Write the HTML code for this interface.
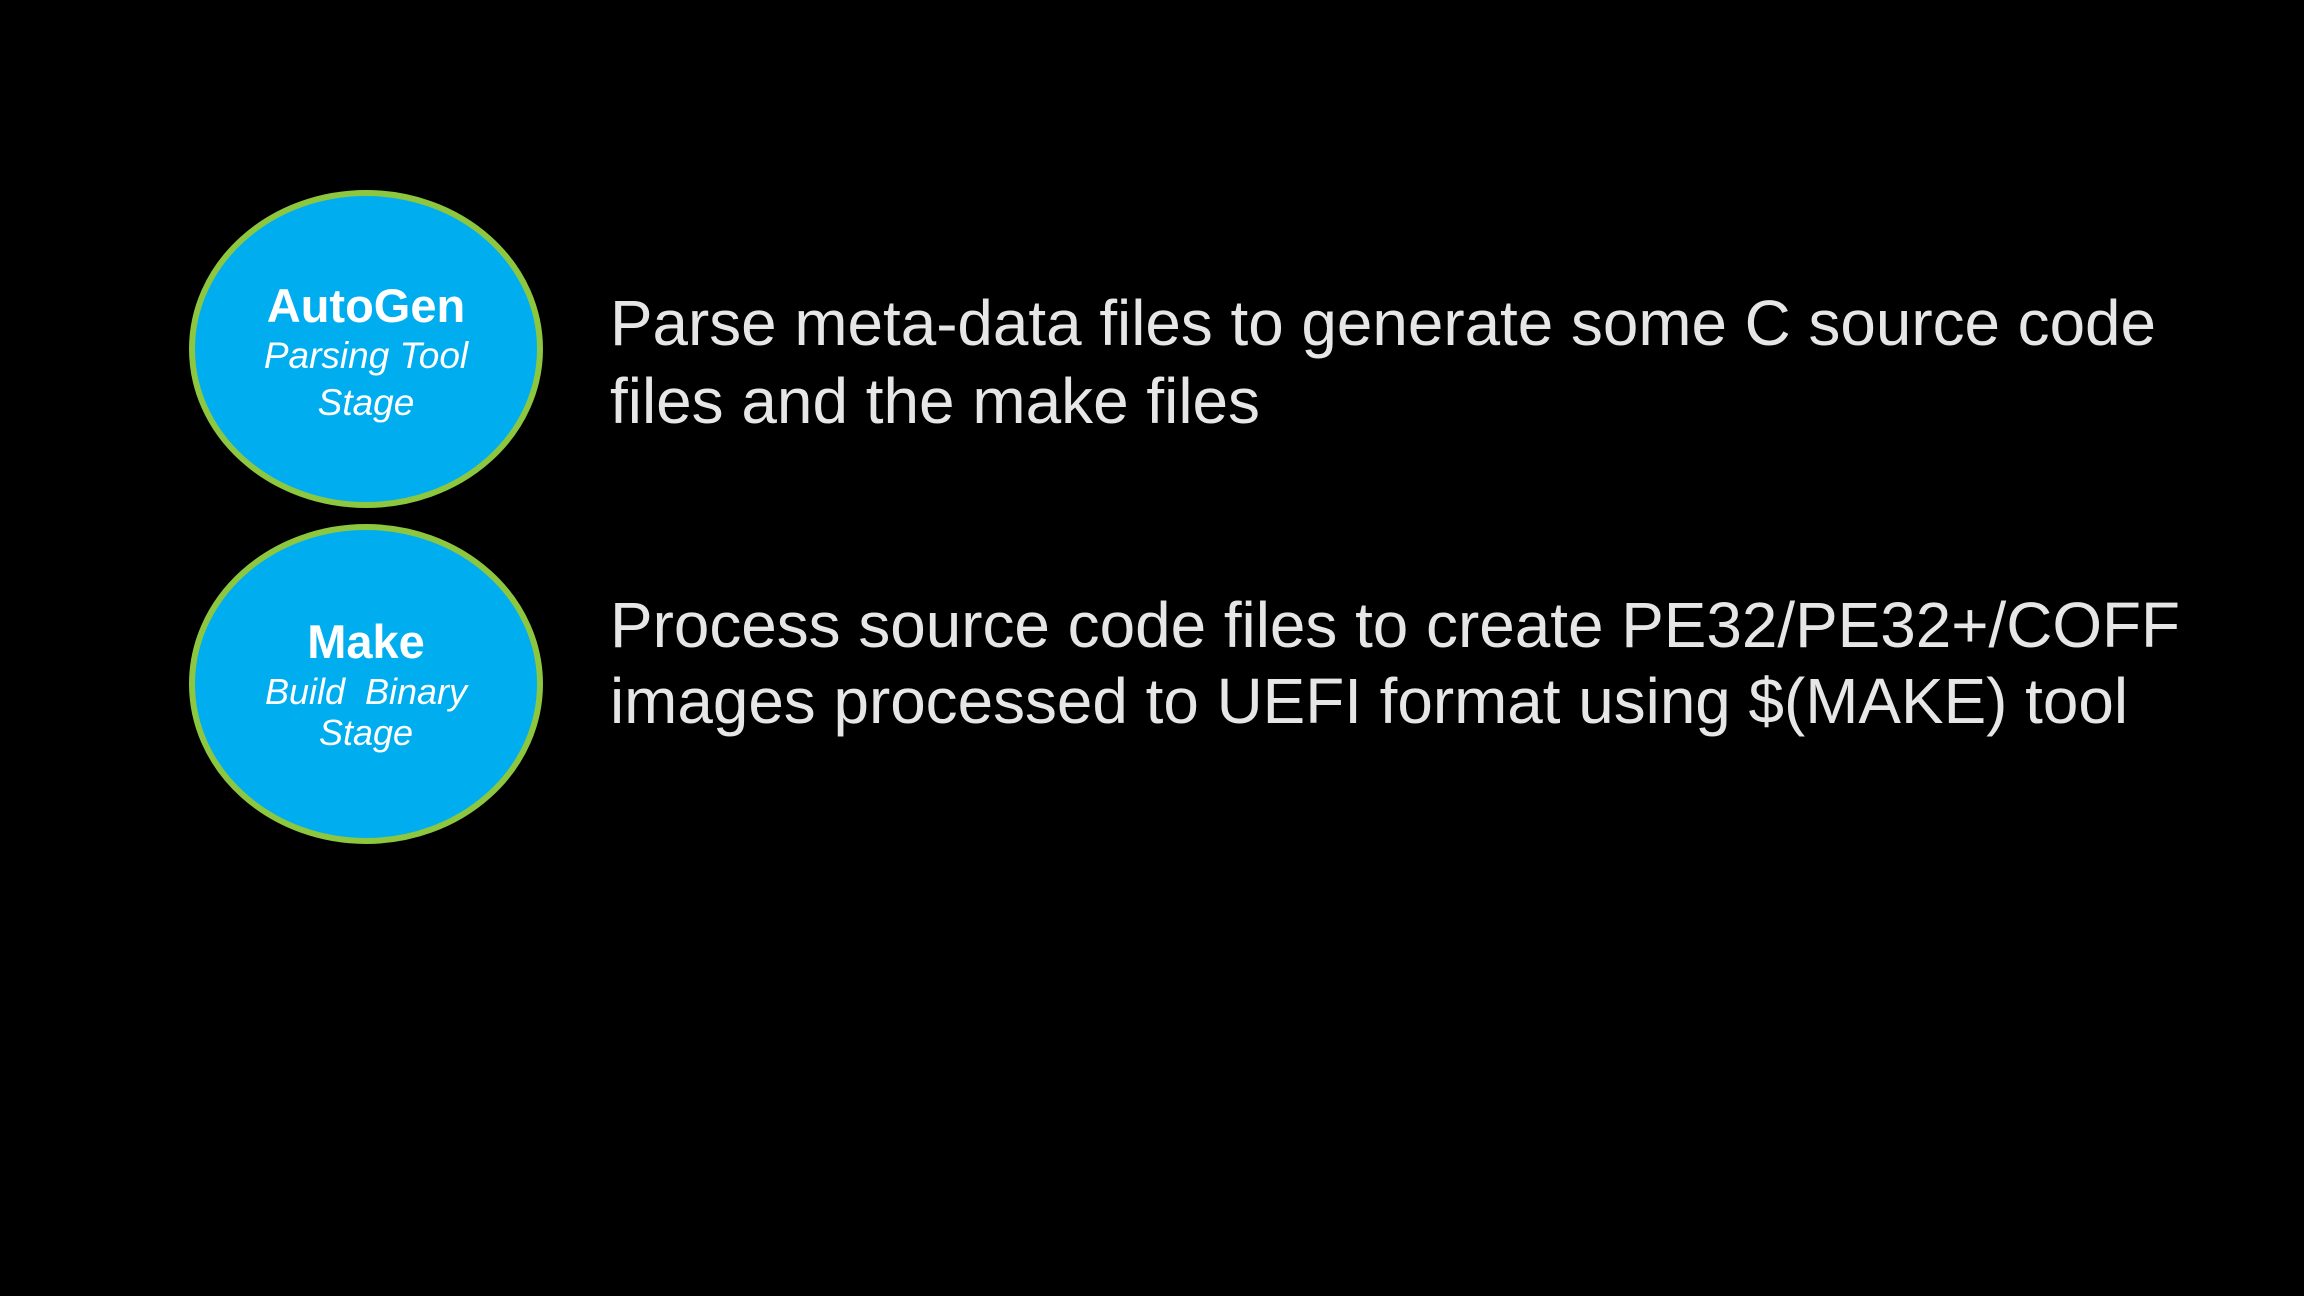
<!DOCTYPE html>
<html><head><meta charset="utf-8"><style>
html,body{margin:0;padding:0;background:#000;width:2304px;height:1296px;overflow:hidden}
svg{display:block}
</style></head><body>
<svg width="2304" height="1296" viewBox="0 0 2304 1296" xmlns="http://www.w3.org/2000/svg">
<rect width="2304" height="1296" fill="#000"/>
<ellipse cx="366" cy="349" rx="174" ry="156" fill="#00aeef" stroke="#8dc63f" stroke-width="6"/>
<ellipse cx="366" cy="684" rx="174" ry="157" fill="#00aeef" stroke="#8dc63f" stroke-width="6"/>
<g font-family="Liberation Sans, sans-serif" fill="#fff" text-anchor="middle">
<text x="366" y="322" font-size="47" font-weight="bold">AutoGen</text>
<text x="366" y="368" font-size="37" font-style="italic">Parsing Tool</text>
<text x="366" y="415" font-size="37" font-style="italic">Stage</text>
<text x="366" y="658" font-size="47" font-weight="bold">Make</text>
<text x="366" y="704" font-size="36" font-style="italic" xml:space="preserve">Build  Binary</text>
<text x="366" y="745" font-size="36" font-style="italic">Stage</text>
</g>
<g font-family="Liberation Sans, sans-serif" fill="#e6e6e6" font-size="64">
<text x="610" y="345" textLength="1546" lengthAdjust="spacingAndGlyphs">Parse meta-data files to generate some C source code</text>
<text x="610" y="423" textLength="650" lengthAdjust="spacingAndGlyphs">files and the make files</text>
<text x="610" y="647" textLength="1570" lengthAdjust="spacingAndGlyphs">Process source code files to create PE32/PE32+/COFF</text>
<text x="610" y="723" textLength="1518" lengthAdjust="spacingAndGlyphs">images processed to UEFI format using $(MAKE) tool</text>
</g>
</svg>
</body></html>
